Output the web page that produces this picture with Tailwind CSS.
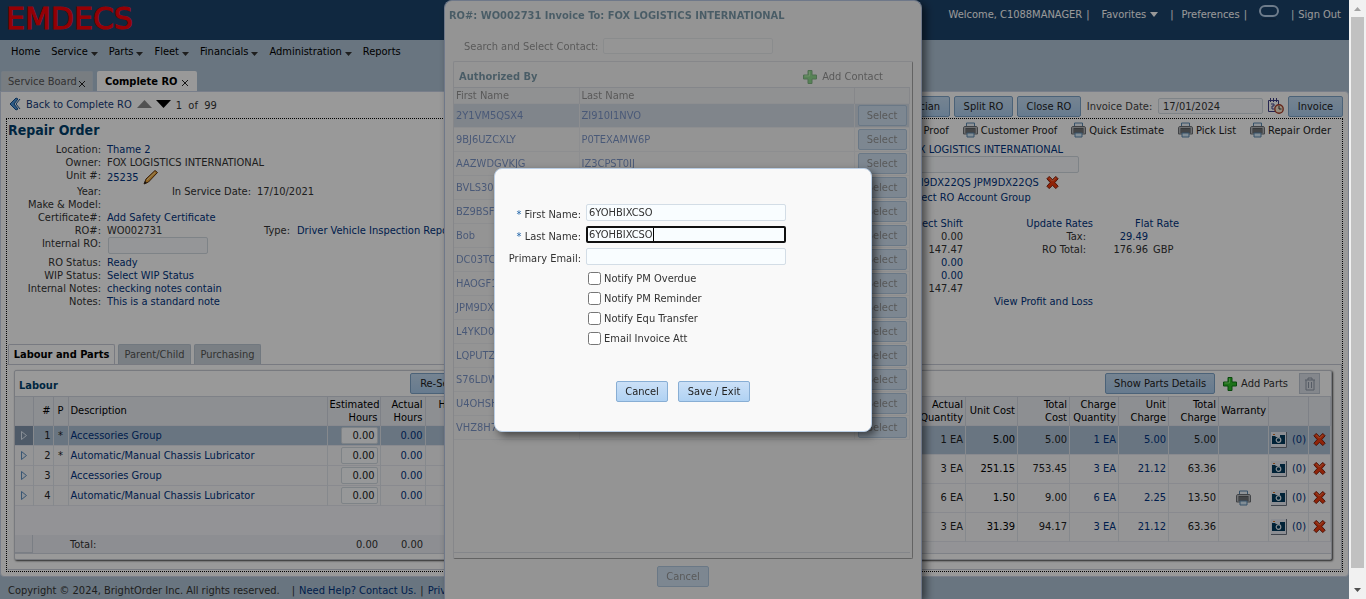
<!DOCTYPE html>
<html lang="en">
<head>
<meta charset="utf-8">
<meta name="viewport" content="width=device-width, initial-scale=1">
<title>EMDECS - Complete RO</title>
<script src="https://cdn.jsdelivr.net/npm/@tailwindcss/browser@4"></script>
</head>
<body class="h-screen overflow-hidden bg-[#afc3d5] font-['Tahoma','DejaVu_Sans_Condensed','DejaVu_Sans',sans-serif] text-[11px] leading-[13px] text-[#333]">

<svg width="0" height="0" class="absolute" aria-hidden="true">
  <defs>
    <symbol id="printer" viewBox="0 0 16 16">
      <path d="M4 5V1h8v4" fill="#eef6fc" stroke="#5a87ae"/>
      <path d="M1 6c0-1 .5-1.500 1.500-1.500h11c1 0 1.500.5 1.500 1.500v6h-14z" fill="#b9bcc0" stroke="#6d7075"/>
      <path d="M3 6h10v5H3z" fill="#5d5f63"/>
      <path d="M3 8h10M3 10h10" stroke="#85888c"/>
      <path d="M4.500 11h7v4h-7z" fill="#d8ecf9" stroke="#5a87ae"/>
    </symbol>
    <symbol id="delete" viewBox="0 0 16 16">
      <path d="M2 4l2.500-2.500L8 5l3.500-3.500L14 4l-3.500 4 3.500 4-2.500 2.500L8 11l-3.500 3.500L2 12l3.500-4z" fill="#f03c10" stroke="#7a1b06" stroke-linejoin="round"/>
      <path d="M4.500 3l3.500 3.500L11.500 3" fill="none" stroke="#ff8a5c"/>
    </symbol>
    <symbol id="plus" viewBox="0 0 16 16">
      <path d="M6 1.500h4V6h4.500v4H10v4.500H6V10H1.500V6H6z" fill="#2fbf2a" stroke="#117a16" stroke-linejoin="round"/>
      <path d="M7.500 2.500V7H2.500" fill="none" stroke="#7ce86a"/>
    </symbol>
    <symbol id="camera" viewBox="0 0 16 16">
      <path d="M0 0h16v16H0z" fill="#e9edf5"/>
      <path d="M0 15.500h15.500V0" fill="none" stroke="#6c7480"/>
      <path d="M1 4h3l1 1h4V3h5v9H1z" fill="#00395c"/>
      <path d="M2 2.500h2" stroke="#d9772b"/>
      <circle cx="7.500" cy="8" r="2.300" fill="#00395c" stroke="#e9f2f8" stroke-width="1.200"/>
    </symbol>
  </defs>
</svg>

<div class="flex h-full">
  <div class="flex min-w-0 flex-1 flex-col">

    <header class="flex h-10 shrink-0 justify-between bg-[#1c436b] pr-2 pl-[6px]">
      <div class="font-['DejaVu_Sans',sans-serif] text-[30px] leading-[38px] text-[#f80008]" style="-webkit-text-stroke:1px #f80008">EMDECS</div>
      <div class="flex items-start gap-1 pt-2 text-white">
        <span>Welcome, C1088MANAGER</span><span class="mr-2">|</span>
        <button type="button" class="mr-2 flex items-center gap-1">Favorites <svg width="8" height="5" viewBox="0 0 8 5"><path d="M0 0h8L4 5z" fill="#fff"/></svg></button>
        <span class="mr-1">|</span><a href="#">Preferences</a><span class="mr-2">|</span>
        <svg class="mr-2 -mt-1" width="20" height="16" viewBox="0 0 20 16"><rect x="1" y="2" width="18" height="10" rx="5" fill="none" stroke="#b8cfe8" stroke-width="2"/><path d="M3 15h14" stroke="#17304e"/></svg>
        <span>|</span><a href="#">Sign Out</a>
      </div>
    </header>

    <nav class="flex h-[31px] shrink-0 items-start gap-[11px] pt-[5px] pl-[11px] text-black" id="nav"></nav>

    <div class="flex h-5 shrink-0 items-stretch gap-1 pl-px">
      <div class="flex w-[92px] items-center justify-between rounded-t-xs border border-b-0 border-[#c3cfda] bg-[#c8d0d8] px-[6px] text-[#555]"><a href="#">Service Board</a><svg width="8" height="8" viewBox="0 0 8 8" class="mt-1"><path d="M1 1l6 6M7 1L1 7" stroke="#222"/></svg></div>
      <div class="flex w-[100px] items-center justify-between rounded-t-xs bg-white px-2 font-bold whitespace-nowrap text-black"><a href="#">Complete RO</a><svg width="8" height="8" viewBox="0 0 8 8" class="mt-1"><path d="M1 1l6 6M7 1L1 7" stroke="#222"/></svg></div>
    </div>

    <main class="flex min-h-0 flex-1 flex-col rounded-tr-sm rounded-b-sm border border-[#c8d3e6] bg-white px-[5px] pb-1">
      <div class="flex h-[26px] shrink-0 items-center justify-between">
        <div class="flex items-center gap-[5px] pb-[2px] pl-[3px]">
          <svg width="12" height="14" viewBox="0 0 12 14"><path d="M7 1L1 7l6 6 2-1-4-5 4-5z" fill="#4f97dc" stroke="#15508e"/><path d="M11 2L7 7l4 5" fill="none" stroke="#15508e"/></svg>
          <a href="#" class="text-[#133a78]">Back to Complete RO</a>
          <svg width="34" height="8" viewBox="0 0 34 8"><path d="M0 8h15L7.500 0z" fill="#888"/><path d="M19 0h15l-7.500 8z" fill="#000"/></svg>
          <span class="pt-[2px]">1 &nbsp;of &nbsp;99</span>
        </div>
        <div class="flex items-center gap-1 pt-[2px] text-[#222]">
          <button type="button" class="h-[21px] rounded-xs border border-[#7ea3c9] bg-linear-to-b from-[#c4dcf3] to-[#abcdee] px-[9px]">Technician</button>
          <button type="button" class="h-[21px] w-[59px] rounded-xs border border-[#7ea3c9] bg-linear-to-b from-[#c4dcf3] to-[#abcdee]">Split RO</button>
          <button type="button" class="h-[21px] w-16 rounded-xs border border-[#7ea3c9] bg-linear-to-b from-[#c4dcf3] to-[#abcdee]">Close RO</button>
          <label for="invdate" class="w-[69px] text-center text-[#444]">Invoice Date:</label>
          <input id="invdate" value="17/01/2024" class="h-4 w-[105px] rounded-xs border border-[#d3dae2] bg-[#f9fbfd] px-1 text-[#333]">
          <svg width="17" height="16" viewBox="0 0 17 16"><path d="M1.500 2.500h10v11h-10z" fill="#fff" stroke="#3f3f86"/><path d="M3.500 0v4M6.500 0v4M9.500 0v4M4 6h3v2H5v3h2" fill="none" stroke="#3f3f86"/><circle cx="12" cy="11" r="4.200" fill="#fbe8cf" stroke="#a8402c" stroke-width="1.400"/><path d="M12 8v3h2.500" fill="none" stroke="#333"/></svg>
          <button type="button" class="h-[21px] w-[55px] rounded-xs border border-[#7ea3c9] bg-linear-to-b from-[#c4dcf3] to-[#abcdee]">Invoice</button>
        </div>
      </div>

      <section class="flex min-h-0 flex-1 flex-col border border-dotted border-black">
        <div class="flex h-[225px] shrink-0 justify-between">
          <div class="shrink-0">
            <h1 class="h-6 pl-px text-[14px] leading-[23px] font-bold text-[#003f6b]">Repair Order</h1>
            <div class="grid grid-cols-[94px_340px] gap-x-[6px] [&>span]:text-right [&_a]:text-[#003380]">
              <span>Location:</span><a href="#">Thame 2</a>
              <span>Owner:</span><b class="font-normal">FOX LOGISTICS INTERNATIONAL</b>
              <span>Unit #:</span><div class="flex h-4 items-center gap-[5px]"><a href="#">25235</a><svg width="16" height="16" viewBox="0 0 16 16"><path d="M1 15l2-5L12 1.500l2.500 2L5.500 13z" fill="#f0a83a" stroke="#5b3210"/><path d="M1 15l1-3 2 2z" fill="#222"/><path d="M4 11l8-7.500" stroke="#ffe1a0"/></svg></div>
              <span>Year:</span><div class="flex gap-[6px]"><span class="w-36 text-right">In Service Date:</span><b class="font-normal">17/10/2021</b></div>
              <span>Make &amp; Model:</span><div></div>
              <span>Certificate#:</span><a href="#">Add Safety Certificate</a>
              <span>RO#:</span><div class="flex"><b class="w-36 shrink-0 font-normal">WO002731</b><span class="w-[46px] shrink-0 pr-[7px] text-right">Type:</span><a href="#" class="whitespace-nowrap">Driver Vehicle Inspection Report</a></div>
              <label for="intro" class="text-right">Internal RO:</label><div class="h-[19px]"><input id="intro" class="ml-px h-[17px] w-[100px] rounded-xs border border-[#d3dae2] bg-[#f9fbfd] px-1"></div>
              <span>RO Status:</span><a href="#">Ready</a>
              <span>WIP Status:</span><a href="#">Select WIP Status</a>
              <span>Internal Notes:</span><a href="#">checking notes contain</a>
              <span>Notes:</span><a href="#">This is a standard note</a>
            </div>
          </div>

          <div class="w-[436px] shrink-0 [&_a]:text-[#003380]">
            <div class="flex h-6 items-center justify-end gap-[13px] pr-[11px] pb-[2px] whitespace-nowrap text-[#222]">
              <button type="button" class="flex items-center gap-[2px]"><svg width="17" height="16"><use href="#printer"/></svg>Proof</button>
              <button type="button" class="flex items-center gap-[2px]"><svg width="17" height="16"><use href="#printer"/></svg>Customer Proof</button>
              <button type="button" class="flex items-center gap-[2px]"><svg width="17" height="16"><use href="#printer"/></svg>Quick Estimate</button>
              <button type="button" class="flex items-center gap-[2px]"><svg width="17" height="16"><use href="#printer"/></svg>Pick List</button>
              <button type="button" class="flex items-center gap-[2px]"><svg width="17" height="16"><use href="#printer"/></svg>Repair Order</button>
            </div>
            <a href="#" class="block">FOX LOGISTICS INTERNATIONAL</a>
            <input aria-label="Reference" class="block h-[17px] w-[173px] rounded-xs border border-[#d3dae2] bg-[#f9fbfd] px-1">
            <div class="flex h-[18px] items-center gap-[6px]"><a href="#">JPM9DX22QS JPM9DX22QS</a><button type="button" aria-label="Remove"><svg width="15" height="15"><use href="#delete"/></svg></button></div>
            <a href="#" class="mb-[13px] block">Select RO Account Group</a>
            <div class="grid grid-cols-[57px_130px_55px_100px] text-right">
              <a href="#">Select Shift</a><a href="#">Update Rates</a><a href="#" class="col-span-2 pl-[42px] text-left">Flat Rate</a>
              <b class="font-normal">0.00</b><span class="pr-[7px]">Tax:</span><a href="#">29.49</a><i></i>
              <b class="font-normal">147.47</b><span class="pr-[7px]">RO Total:</span><b class="font-normal">176.96</b><span class="pl-[5px] text-left">GBP</span>
              <a href="#">0.00</a><i></i><i></i><i></i>
              <a href="#">0.00</a><i></i><i></i><i></i>
              <b class="font-normal">147.47</b><i></i><i></i><i></i>
              <i></i><a href="#">View Profit and Loss</a>
            </div>
          </div>
        </div>

        <div class="flex h-5 shrink-0 gap-[3px] pl-px">
          <button type="button" class="w-[107px] rounded-t-xs border border-b-0 border-[#c8ccd8] font-bold whitespace-nowrap text-black">Labour and Parts</button>
          <button type="button" class="w-[73px] rounded-t-xs border border-b-0 border-[#bcc8d4] bg-[#ccd4dc] text-[#555]">Parent/Child</button>
          <button type="button" class="w-[67px] rounded-t-xs border border-b-0 border-[#bcc8d4] bg-[#ccd4dc] text-[#555]">Purchasing</button>
        </div>

        <div class="mb-px flex min-h-0 flex-1 gap-[10px] rounded-b-xs border-y border-r border-[#c8ccd8] pt-[5px] pr-[9px] pb-[9px] pl-[7px]">
          <div class="flex min-w-0 flex-1 flex-col overflow-hidden rounded-xs border border-[#c8ccd4] bg-white pb-[5px] shadow-[1px_1px_2px_#444]">
            <div class="flex h-[25px] shrink-0 items-center justify-between pr-[172px] pl-1">
              <h2 class="pt-1 font-bold text-[#003f6b]">Labour</h2>
              <button type="button" class="h-[21px] rounded-xs border border-[#7ea3c9] bg-linear-to-b from-[#c4dcf3] to-[#abcdee] px-[9px] text-[#222]">Re-Sequence</button>
            </div>
            <div class="flex min-h-0 flex-1 flex-col justify-between border-y border-[#d3d8e2] bg-[#f5f6fa]">
              <table class="w-full table-fixed border-collapse text-[#222]">
                <colgroup><col class="w-[18px]"><col class="w-5"><col class="w-[15px]"><col class="w-[259px]"><col class="w-[53px]"><col class="w-[45px]"><col></colgroup>
                <thead class="bg-[#eceef4] text-black">
                  <tr class="h-7 text-right [&>th]:border-r [&>th]:border-[#d3d8e2] [&>th]:px-[2px] [&>th]:font-normal"><th></th><th>#</th><th class="text-center">P</th><th class="text-left">Description</th><th>Estimated Hours</th><th>Actual Hours</th><th class="text-left"><span class="block w-10 text-right">Hours Left</span></th></tr>
                </thead>
                <tbody id="labour"></tbody>
              </table>
              <div class="flex h-[18px] bg-[#ebedf3] leading-[20px]"><span class="w-[18px] border-r border-b border-[#ccd2dc]"></span><span class="w-[37px]"></span><span class="w-[259px]">Total:</span><span class="w-[49px] text-right">0.00</span><span class="w-[45px] text-right">0.00</span></div>
            </div>
          </div>

          <div class="flex min-w-0 flex-1 flex-col overflow-hidden rounded-xs border border-[#c8ccd4] bg-white pb-[5px] shadow-[1px_1px_2px_#444]">
            <div class="flex h-[25px] shrink-0 items-center justify-end gap-[7px] pr-[11px]">
              <button type="button" class="h-[21px] w-[110px] rounded-xs border border-[#7ea3c9] bg-linear-to-b from-[#c4dcf3] to-[#abcdee] whitespace-nowrap text-[#222]">Show Parts Details</button>
              <button type="button" class="mr-1 flex items-center gap-[3px] text-[#333]"><svg width="16" height="16"><use href="#plus"/></svg>Add Parts</button>
              <button type="button" aria-label="Delete" class="grid size-[21px] place-items-center border border-[#c0c8d4] bg-[#dde2ea]"><svg width="12" height="14" viewBox="0 0 12 14"><path d="M1 3h10M4 3V1h4v2M2 3v10h8V3M4.500 5v6M7.500 5v6" fill="none" stroke="#8e98a8"/></svg></button>
            </div>
            <div class="min-h-0 flex-1 border-y border-[#d3d8e2] bg-[#f5f6fa]">
              <table class="w-full table-fixed border-collapse text-[#222]">
                <colgroup><col><col class="w-[52px]"><col class="w-[52px]"><col class="w-[49px]"><col class="w-[50px]"><col class="w-[50px]"><col class="w-[50px]"><col class="w-10"><col class="w-[22px]"></colgroup>
                <thead class="bg-[#eceef4] text-black">
                  <tr class="h-7 text-right [&>th]:border-r [&>th]:border-[#d3d8e2] [&>th]:px-[2px] [&>th]:font-normal"><th>Actual<br>Quantity</th><th class="whitespace-nowrap">Unit Cost</th><th>Total<br>Cost</th><th>Charge Quantity</th><th>Unit Charge</th><th>Total Charge</th><th class="text-center">Warranty</th><th></th><th></th></tr>
                </thead>
                <tbody id="parts"></tbody>
              </table>
            </div>
          </div>
        </div>
      </section>
    </main>

    <footer class="flex h-[22px] shrink-0 items-center gap-1 pt-1 pl-2 whitespace-nowrap [&_a]:text-[#003380]">
      <span class="mr-2">Copyright © 2024, BrightOrder Inc. All rights reserved.</span><span>|</span><a href="#">Need Help? Contact Us.</a><span>|</span><a href="#">Privacy Policy</a>
    </footer>
  </div>

  <div class="flex w-[17px] shrink-0 flex-col items-center justify-between bg-[#f1f1f1]">
    <svg width="17" height="17" viewBox="0 0 17 17"><path d="M5 11h7L8.500 7z" fill="#a3a3a3"/></svg>
    <div class="w-[13px] flex-1 bg-[#c1c1c1]"></div>
    <svg class="mt-[13px]" width="17" height="18" viewBox="0 0 17 18"><path d="M5 7h7l-3.500 4z" fill="#505050"/></svg>
  </div>
</div>

<!-- Contact picker, sitting under the backdrop while the contact form is open -->
<div class="fixed inset-0 flex justify-center overflow-hidden">
  <div role="dialog" aria-label="Select contact" class="flex h-full w-[478px] flex-col rounded-t-lg border border-b-0 border-[#b9c9e4] bg-[#f7f7f7] px-2 shadow-[4px_3px_8px_#0008]">
    <div class="flex h-full flex-col opacity-50">
      <h2 class="-ml-1 h-[37px] pt-2 font-bold whitespace-nowrap text-[#003f5f]">RO#: WO002731 Invoice To: FOX LOGISTICS INTERNATIONAL</h2>
      <div class="flex h-[23px] items-start gap-[7px] pl-[11px]"><label for="search" class="w-[132px] pt-[2px] text-right whitespace-nowrap">Search and Select Contact:</label><input id="search" class="h-4 w-[170px] rounded-xs border border-[#d9dce2] bg-[#fafafa] px-1"></div>
      <div class="flex flex-1 flex-col rounded-xs border border-[#c9ced8] border-r-[#555] border-b-[#555] pb-[5px]">
        <div class="flex h-[25px] items-center justify-between pt-1 pr-[29px] pl-[5px]">
          <h3 class="font-bold text-[#003f5f]">Authorized By</h3>
          <button type="button" class="flex items-center gap-1"><svg width="16" height="16"><use href="#plus"/></svg>Add Contact</button>
        </div>
        <div class="mr-[2px] flex-1 border-y border-[#c4cad8]">
          <table class="w-full table-fixed border-collapse">
            <colgroup><col class="w-[125px]"><col><col class="w-[55px]"></colgroup>
            <thead class="bg-[#eceef2]"><tr class="h-[15px] text-left [&>th]:border-r [&>th]:border-[#c9ced8] [&>th]:px-[2px] [&>th]:font-normal"><th>First Name</th><th>Last Name</th><th></th></tr></thead>
            <tbody id="contacts"></tbody>
          </table>
        </div>
      </div>
      <div class="flex h-10 items-start justify-center pt-[7px]"><button type="button" class="h-[21px] w-[52px] rounded-xs border border-[#6d9cc9] bg-[#abcdee]">Cancel</button></div>
    </div>
  </div>
</div>

<div class="fixed inset-y-0 right-[17px] left-0 bg-black/40"></div>

<div class="fixed inset-0 flex items-center justify-center pt-px">
  <form role="dialog" aria-label="Add contact" class="flex h-[264px] w-[378px] flex-col rounded-lg border border-[#b9cde4] bg-[#f9f9f9] pt-[35px] shadow-[4px_4px_8px_#0008]">
    <div class="grid grid-cols-[86px_200px] items-center gap-x-[5px] gap-y-[5px] [&>label]:pt-1 [&>label]:text-right [&>label]:whitespace-nowrap">
      <label for="fn"><span class="text-[#1d62a8]">*</span> First Name:</label><input id="fn" value="6YOHBIXCSO" class="h-[17px] rounded-xs border border-[#d3dde6] bg-[#f9fdff] px-[2px]">
      <label for="ln"><span class="text-[#1d62a8]">*</span> Last Name:</label><div class="flex h-[17px] items-center rounded-xs border-2 border-[#101010] bg-[#f9fdff] pl-px"><input id="ln" value="6YOHBIXCSO" class="field-sizing-content h-[13px] border-r border-black outline-none"></div>
      <label for="em">Primary Email:</label><input id="em" type="email" class="h-[17px] rounded-xs border border-[#d3dde6] bg-[#f9fdff] px-[2px]">
    </div>
    <div class="mt-[3px] ml-[93px] flex flex-col [&>label]:flex [&>label]:h-5 [&>label]:items-center [&>label]:gap-[3px]">
      <label><input type="checkbox" class="size-[13px]">Notify PM Overdue</label>
      <label><input type="checkbox" class="size-[13px]">Notify PM Reminder</label>
      <label><input type="checkbox" class="size-[13px]">Notify Equ Transfer</label>
      <label><input type="checkbox" class="size-[13px]">Email Invoice Att</label>
    </div>
    <div class="mt-[33px] ml-[121px] flex gap-[10px] text-[#222]">
      <button type="button" class="h-[21px] w-[52px] rounded-xs border border-[#88aed4] bg-linear-to-b from-[#cbe0f7] to-[#b0d2f3]">Cancel</button>
      <button type="button" class="h-[21px] w-[72px] rounded-xs border border-[#88aed4] bg-linear-to-b from-[#cbe0f7] to-[#b0d2f3]">Save / Exit</button>
    </div>
  </form>
</div>

<script>
const put = (id, html) => { document.getElementById(id).innerHTML = html; };

put('nav', ['Home', 'Service', 'Parts', 'Fleet', 'Financials', 'Administration', 'Reports'].map(t =>
  /Home|Reports/.test(t) ? `<a href="#">${t}</a>` :
  `<button type="button" class="flex items-center gap-[3px]">${t}<svg width="7" height="4" viewBox="0 0 7 4" class="mt-1"><path d="M0 0h7L3.500 4z" fill="#333"/></svg></button>`).join(''));

put('labour', [['*', 'Accessories Group'], ['*', 'Automatic/Manual Chassis Lubricator'], ['', 'Accessories Group'], ['', 'Automatic/Manual Chassis Lubricator']].map(([p, d], i) => `
  <tr class="h-5 border-y border-[#e4e7ee] text-right [&>td]:border-r [&>td]:border-[#e0e4ec] [&>td]:px-[2px] ${i ? 'bg-[#f8f8fa]' : 'bg-[#afc3d8]'}">
    <td class="${i ? '' : 'bg-[#8397ad]'}"><svg class="mx-auto" width="6" height="9" viewBox="0 0 6 9"><path d="M.5 .5v8l5-4z" fill="${i ? '#eef4fb' : '#8397ad'}" stroke="${i ? '#5f8fc0' : '#e4eefa'}"/></svg></td>
    <td>${i + 1}</td><td class="text-center">${p}</td><td class="text-left"><a href="#" class="text-[#003380]">${d}</a></td>
    <td><input aria-label="Estimated hours ${i + 1}" value="0.00" class="ml-auto block h-[17px] w-[37px] rounded-xs border border-[#d3dae2] bg-[#fcfdff] px-[2px] text-right"></td>
    <td class="text-[#003380]">0.00</td><td></td>
  </tr>`).join(''));

put('parts', [['1 EA', '5.00', '5.00', '5.00', '5.00'], ['3 EA', '251.15', '753.45', '21.12', '63.36'], ['6 EA', '1.50', '9.00', '2.25', '13.50'], ['3 EA', '31.39', '94.17', '21.12', '63.36']].map((r, i) => `
  <tr class="h-[29px] border-y border-[#e4e7ee] text-right [&>td]:border-r [&>td]:border-[#e0e4ec] [&>td]:px-[2px] ${i ? 'bg-[#f8f8fa]' : 'bg-[#afc3d8]'}">
    <td>${r[0]}</td><td class="text-black">${r[1]}</td><td>${r[2]}</td><td class="text-[#003380]">${r[0]}</td><td class="text-[#003380]">${r[3]}</td><td>${r[4]}</td>
    <td>${i === 2 ? '<svg class="mx-auto" width="17" height="16"><use href="#printer"/></svg>' : ''}</td>
    <td><div class="flex items-center justify-between"><svg width="16" height="16"><use href="#camera"/></svg><a href="#" class="text-[#003380]">(0)</a></div></td>
    <td><svg class="mx-auto" width="15" height="15"><use href="#delete"/></svg></td>
  </tr>`).join(''));

put('contacts', [['2Y1VM5QSX4', 'ZI910I1NVO'], ['9BJ6UZCXLY', 'P0TEXAMW6P'], ['AAZWDGVKJG', 'IZ3CPST0IJ'], ['BVLS30', ''], ['BZ9BSF', ''], ['Bob', ''], ['DC03TC', ''], ['HAOGF1', ''], ['JPM9DX22QS', ''], ['L4YKD0', ''], ['LQPUTZ', ''], ['S76LDW', ''], ['U4OHSH', ''], ['VHZ8H7', '']].map(([f, l], i) => `
  <tr class="h-6 border-y border-[#e1e4ea] text-[#003399] [&>td]:border-r [&>td]:border-[#e1e4ea] [&>td]:px-[2px] ${i ? '' : 'bg-[#b4c6da]'}">
    <td>${f}</td><td>${l}</td>
    <td><button type="button" class="mx-auto block h-[21px] w-[49px] rounded-xs border border-[#6d9cc9] bg-[#abcdee] text-[#333]">Select</button></td>
  </tr>`).join(''));
</script>
</body>
</html>
